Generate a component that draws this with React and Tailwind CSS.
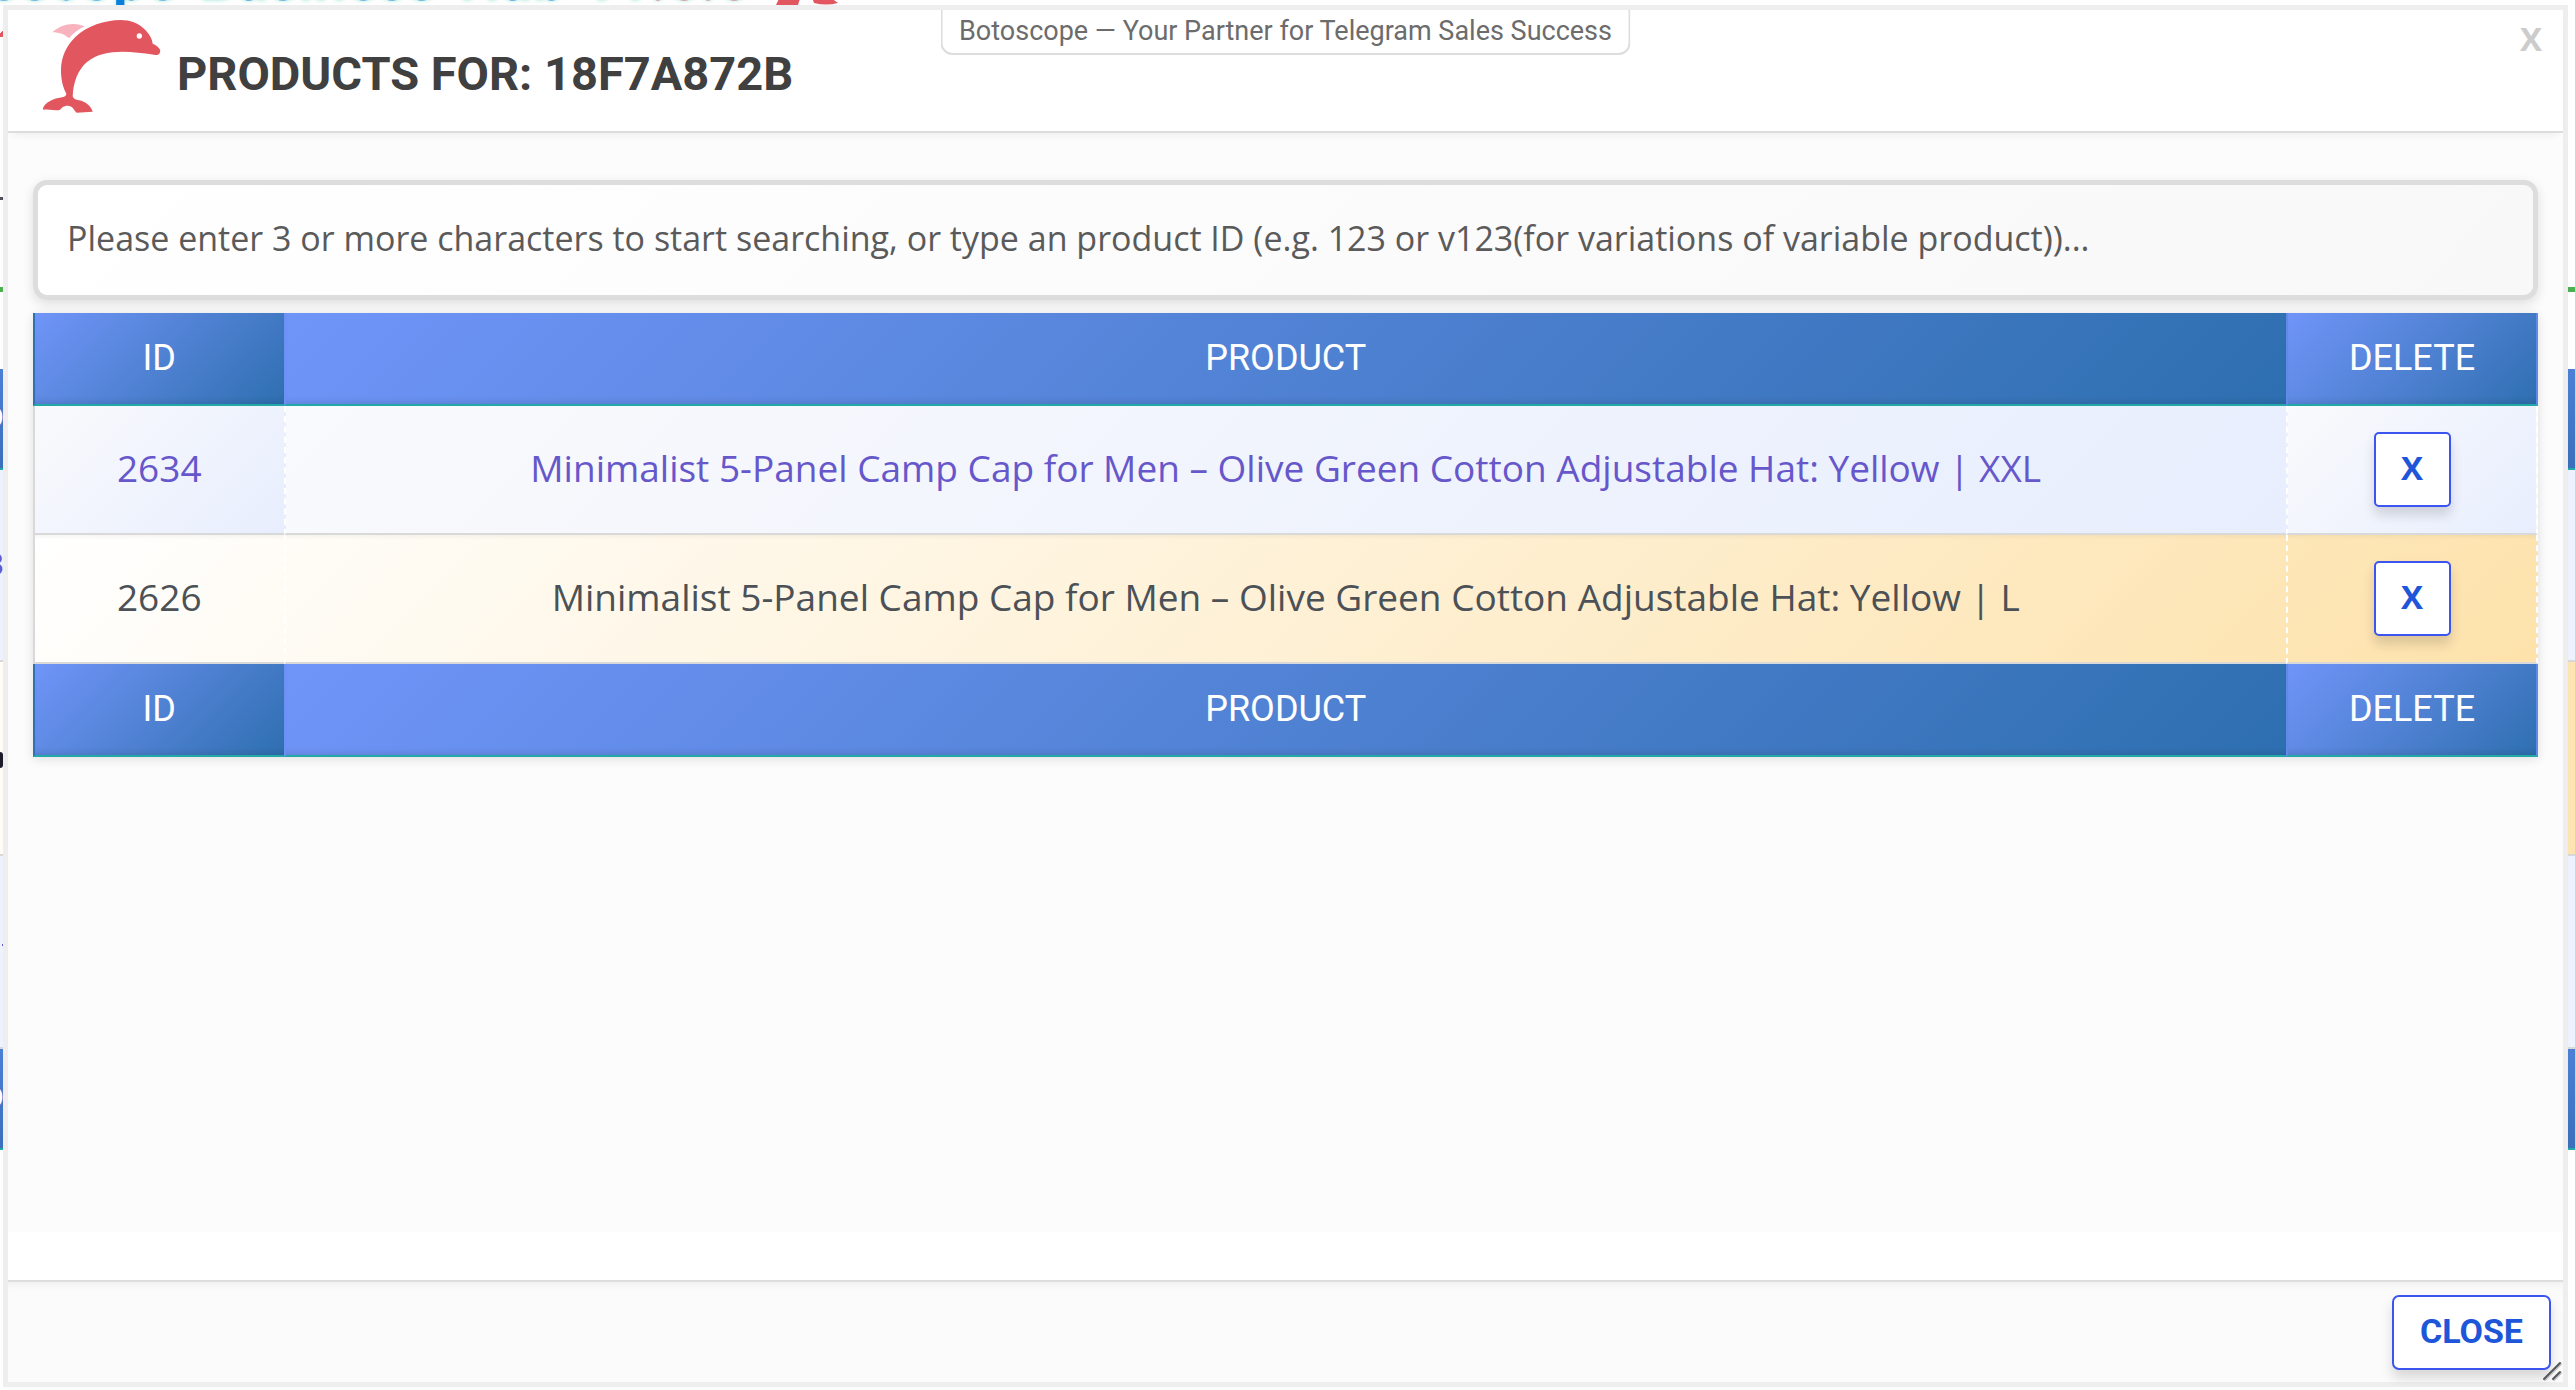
const products = [
  {
    id: '2634',
    name: 'Minimalist 5-Panel Camp Cap for Men – Olive Green Cotton Adjustable Hat: Yellow | XXL',
    row: 'text-[#6657cb]',
    cell: 'bg-linear-135 from-[#f9fafc] to-[#e8eefe]',
  },
  {
    id: '2626',
    name: 'Minimalist 5-Panel Camp Cap for Men – Olive Green Cotton Adjustable Hat: Yellow | L',
    row: 'text-[#4b5156] bg-linear-135 from-white to-[#fde2ab]',
    cell: 'shadow-[inset_0_6px_6px_-6px_rgba(0,0,0,0.08)]',
  },
];

function Dolphin() {
  return (
    <svg viewBox="120 54 372 294" className="h-[98px] w-[124px] shrink-0" aria-hidden="true">
      <path
        fill="#f9b3bf"
        d="M157 97C175 80 197 72 220 72C233 72 244 75 254 79C237 87 220 99 207 115C195 104 180 97 157 97Z"
      />
      <path
        fill="#e2575f"
        d="M199 281C187 260 183 235 183 211C183 172 199 137 226 111C262 77 314 61 362 60C390 60 415 69 432 86C448 101 456 115 458 131C467 134 476 141 480 149C482 154 480 160 474 164C471 165 466 165 462 164C428 159 398 155 368 155C326 155 290 163 262 185C234 208 220 246 218 289C221 297 228 300 237 301C256 305 273 317 278 335C262 335 247 338 230 338C224 334 222 325 214 320C206 316 195 317 188 322C184 325 181 330 177 331C161 331 146 327 130 329C126 324 136 312 145 306C159 297 176 293 190 291C195 289 199 286 199 281Z"
      />
      <circle cx="418" cy="108" r="8" fill="#fff" />
    </svg>
  );
}

function HeadRow() {
  const cell =
    'h-[93px] border-b-2 border-b-[#22a8a6] bg-linear-135 from-[#7095f9] to-[#2d6fb0] bg-origin-border p-0 pb-[2px] font-normal shadow-[inset_0_-6px_6px_-4px_rgba(0,0,0,0.12)]';
  return (
    <tr className="font-[Roboto,sans-serif] text-[36px] leading-[40px] text-white">
      <th className={`${cell} w-1/10 border-l-2 border-l-[#2f72b4]`}>ID</th>
      <th className={`${cell} border-l-2 border-l-[#6c91f4]`}>PRODUCT</th>
      <th className={`${cell} w-[252px] border-x-2 border-x-[#6089e8]`}>DELETE</th>
    </tr>
  );
}

function PageBehind() {
  const bar =
    'h-[101px] shrink-0 border-b-2 border-[#22a8a6] bg-linear-to-b from-[#4b80d6] to-[#3b6fbb] pt-[24px]';
  const glyph = 'flex w-[4px] justify-end';
  return (
    <div
      aria-hidden="true"
      className="absolute inset-0 flex flex-col overflow-hidden bg-white font-[Roboto,sans-serif] text-[32px] leading-[48px]"
    >
      <div className="-mt-[50px] -ml-[101px] flex h-[60px] shrink-0 items-start gap-[22px] text-[58px] leading-[60px] font-bold whitespace-nowrap text-[#0b7fdc] [text-shadow:0_0_4px_#9fe3d3]">
        <span>Botoscope</span>
        <span>Business</span>
        <span>Hub</span>
        <span className="text-[#e2575f]">v1.6.6</span>
        <svg viewBox="0 0 64 60" className="ml-1 h-[60px] w-[64px]">
          <path fill="#e2575f" d="M12 30H30L22 55H0ZM30 30L62 53Q50 56 38 53Z" />
        </svg>
      </div>
      <div className="mt-[17px] h-[10px] w-[3px] shrink-0 bg-linear-135 from-white from-50% to-[#e2575f] to-50%" />
      <div className="mt-[160px] h-[3px] w-[3px] shrink-0 bg-[#4b5156]" />
      <div className="mt-[87px] h-[5px] shrink-0 bg-[#4caf50]" />
      <div className="mt-[77px] flex flex-col">
        <div className={bar}>
          <div className={`${glyph} text-white`}>ID</div>
        </div>
        <div className="h-[192px] border-b-2 border-[#d8d8d8] bg-[#edf2fe] pt-[70px]">
          <div className={`${glyph} text-[#6657cb]`}>8</div>
        </div>
        <div className="h-[194px] border-b-2 border-[#d8d8d8] bg-linear-to-r from-[#fffcf5] to-[#fde4b2] pt-[90px]">
          <div className="h-[16px] w-[3px] rounded-r-full bg-[#1b1b2b]" />
        </div>
        <div className="h-[193px] border-b-2 border-[#d8d8d8] bg-[#edf2fe] pt-[88px]">
          <div className="ml-[2px] h-[2px] w-[2px] bg-[#6657cb]" />
        </div>
        <div className={bar}>
          <div className={`${glyph} text-white`}>ID</div>
        </div>
      </div>
    </div>
  );
}

const button =
  'border-2 border-[#3c54f0] bg-white pb-1 text-[#1d56d8] shadow-[0_8px_12px_rgba(0,0,0,0.14)] cursor-pointer';

export default function App() {
  return (
    <div className="relative flex min-h-screen flex-col pt-[5px] pr-[7px] pb-[3px] pl-[3px]">
      <PageBehind />
      <section
        role="dialog"
        aria-labelledby="dialog-title"
        className="relative flex grow flex-col border-[5px] border-[#eeeeee] bg-white"
      >
        <header className="relative z-10 flex h-[123px] items-start border-b-2 border-[#dddddd] bg-white pl-8 shadow-[0_6px_8px_-4px_rgba(0,0,0,0.06)]">
          <div className="flex items-center gap-[13px] pt-2">
            <Dolphin />
            <h1
              id="dialog-title"
              className="pt-[14px] font-[Roboto,sans-serif] text-[47px] leading-[54px] font-bold text-[#404040]"
            >
              PRODUCTS FOR: 18F7A872B
            </h1>
          </div>
          <div className="absolute top-0 left-1/2 -translate-x-1/2 rounded-b-xl border-2 border-t-0 border-[#dddddd] px-[17px] pt-[2px] pb-[2px] font-[Roboto,sans-serif] text-[27px] leading-[39px] whitespace-nowrap text-[#6c6c6c]">
            Botoscope — Your Partner for Telegram Sales Success
          </div>
          <button
            type="button"
            aria-label="Close dialog"
            className="absolute top-2 right-5 w-6 cursor-pointer font-['Open_Sans',sans-serif] text-[33px] leading-[42px] font-bold text-[#cccccc]"
          >
            X
          </button>
        </header>

        <main className="mb-12 grow bg-[#fcfcfc] px-[25px] pt-[47px] font-['Open_Sans',sans-serif]">
          <input
            type="text"
            aria-label="Search products"
            placeholder="Please enter 3 or more characters to start searching, or type an product ID (e.g. 123 or v123(for variations of variable product))..."
            className="block h-[120px] w-full rounded-[14px] border-[5px] border-[#dddddd] bg-linear-135 from-white to-[#f8f8f8] px-[29px] pb-1 text-[34px] text-[#555555] shadow-[0_4px_12px_rgba(0,0,0,0.12)] outline-none placeholder:text-[#5a5a5a]"
          />
          <table className="mt-[13px] w-full table-fixed border-separate border-spacing-0 text-center text-[37px] leading-[48px] shadow-[0_2px_10px_rgba(0,0,0,0.12)]">
            <thead>
              <HeadRow />
            </thead>
            <tbody>
              {products.map((p) => (
                <tr key={p.id} className={p.row}>
                  <td className={`border-b-2 border-l-2 border-[#d9d9d9] pb-1 ${p.cell}`}>{p.id}</td>
                  <td
                    className={`border-b-2 border-l-2 border-b-[#d9d9d9] border-l-white pb-1 [border-left-style:dashed] ${p.cell}`}
                  >
                    {p.name}
                  </td>
                  <td
                    className={`border-x-2 border-b-2 border-x-white border-b-[#d9d9d9] py-[26px] [border-left-style:dashed] [border-right-style:dashed] ${p.cell}`}
                  >
                    <button
                      type="button"
                      aria-label={`Delete product ${p.id}`}
                      className={`${button} mx-auto block h-[75px] w-[77px] rounded-[5px] text-[33px] font-bold`}
                    >
                      X
                    </button>
                  </td>
                </tr>
              ))}
            </tbody>
            <tfoot>
              <HeadRow />
            </tfoot>
          </table>
        </main>

        <footer className="relative flex justify-end border-t-2 border-[#dddddd] bg-[#fbfbfb] px-3 pt-[13px] pb-3 shadow-[inset_0_8px_8px_-6px_rgba(0,0,0,0.06)]">
          <button
            type="button"
            className={`${button} h-[75px] rounded-[7px] px-[26px] font-[Roboto,sans-serif] text-[34px] leading-[40px] font-bold`}
          >
            CLOSE
          </button>
          <svg
            viewBox="0 0 20 20"
            className="absolute right-[1px] bottom-[1px] size-5"
            fill="none"
            strokeLinecap="round"
            aria-hidden="true"
          >
            <path d="M3 19L19 3M12 19L19 12" stroke="#c4c4c4" strokeWidth="2" />
            <path d="M2 18L18 2M11 18L18 11" stroke="#55565c" strokeWidth="2" />
          </svg>
        </footer>
      </section>
    </div>
  );
}
